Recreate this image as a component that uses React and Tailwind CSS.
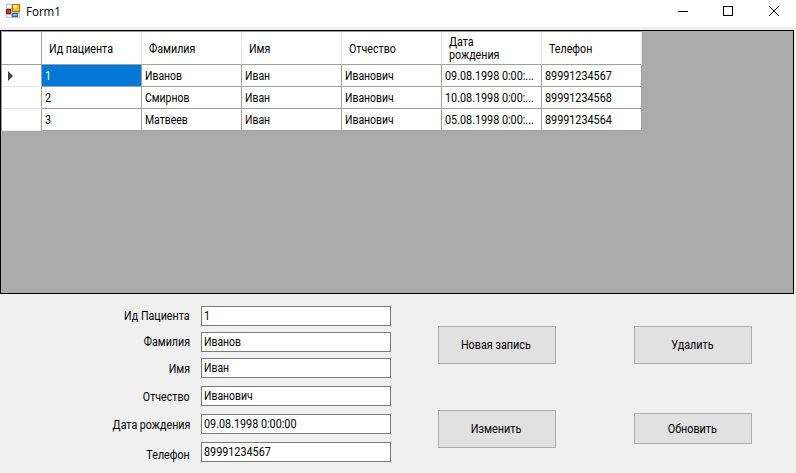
const columns = ["Ид пациента", "Фамилия", "Имя", "Отчество", "Дата рождения", "Телефон"];

const rows = [
  ["1", "Иванов", "Иван", "Иванович", "09.08.1998 0:00:...", "89991234567"],
  ["2", "Смирнов", "Иван", "Иванович", "10.08.1998 0:00:...", "89991234568"],
  ["3", "Матвеев", "Иван", "Иванович", "05.08.1998 0:00:...", "89991234564"],
];

const fields = [
  { label: "Ид Пациента", value: "1", gap: "mb-1.5" },
  { label: "Фамилия", value: "Иванов", gap: "mb-1.5" },
  { label: "Имя", value: "Иван", gap: "mb-2", shift: "pt-0.5" },
  { label: "Отчество", value: "Иванович", gap: "mb-2", shift: "pt-0.5" },
  { label: "Дата рождения", value: "09.08.1998 0:00:00", gap: "mb-2", shift: "pt-0.5" },
  { label: "Телефон", value: "89991234567", gap: "", shift: "pt-1.5" },
];

function AppIcon() {
  return (
    <svg width="14" height="14" viewBox="0 0 14 14" shapeRendering="crispEdges" className="shrink-0">
      <path d="M0 0h14v14H0z" fill="#c3c3c3" />
      <path d="M1 1h4v3H1zM1 11h4v2H1zM12 10h1v3h-1z" fill="#fff" />
      <path d="M6 0h8v8H6z" fill="#a87508" />
      <path d="M7 1h6v6H7z" fill="#ffc51f" />
      <path d="M7 1h4v3H7z" fill="#ffe68c" />
      <path d="M0 5h5v5H0z" fill="#8c1111" />
      <path d="M1 6h3v3H1z" fill="#d43a2a" />
      <path d="M6 9h6v4H6z" fill="#2860c0" />
      <path d="M7 10h4v2H7z" fill="#7fb2f5" />
    </svg>
  );
}

// Digits keep slightly wider proportions than Cyrillic words.
function Value({ children }) {
  const numeric = /^[\d.]/.test(children);
  return <span className={`origin-left ${numeric ? "scale-x-[0.9]" : "scale-x-[0.87]"}`}>{children}</span>;
}

function Button({ children, height }) {
  return (
    <button className={`flex w-[118px] items-center justify-center border border-[#adadad] bg-[#e1e1e1] pr-0.5 ${height}`}>
      <span className="scale-x-[0.9]">{children}</span>
    </button>
  );
}

export default function App() {
  return (
    <div className="flex h-[473px] w-[796px] flex-col overflow-hidden bg-[#f0f0f0] font-[Roboto,'Liberation_Sans',sans-serif] text-[12px] leading-[14px] whitespace-nowrap text-black">
      <header className="flex h-[27px] shrink-0 items-start bg-white pt-1 pl-1.5">
        <AppIcon />
        <span className="ml-1.5 origin-left scale-x-[0.96] pt-px font-['Open_Sans','Noto_Sans',sans-serif]">Form1</span>
        <svg width="102" height="12" viewBox="0 0 102 12" className="mt-px mr-4 ml-auto" fill="none" stroke="#000" shapeRendering="crispEdges">
          <path d="M0 6.5h10M45.5 1.5h9v9h-9z" />
          <path d="M91 1l10 10M101 1L91 11" shapeRendering="auto" />
        </svg>
      </header>

      <main className="mt-[3px] h-[264px] w-[794px] shrink-0 border border-black bg-[#ababab]">
        <div className="w-[641px] border-t border-l border-[#a0a0a0]">
          <div className="flex h-[33px] bg-white">
            <div className="w-10 border-r border-b border-[#a0a0a0]" />
            {columns.map((name) => (
              <div key={name} className={`flex w-[100px] items-center border-r border-b border-r-[#e5e5e5] border-b-[#a0a0a0] pl-[7px] leading-[13px] ${name === "Дата рождения" ? "pt-0.5" : "pt-[3px]"}`}>
                <span className={`origin-left scale-x-[0.89] ${name === "Дата рождения" ? "w-16 whitespace-normal" : ""}`}>{name}</span>
              </div>
            ))}
          </div>
          {rows.map((row, r) => (
            <div key={row[0]} className="flex h-[22px] bg-white">
              <div className="flex w-10 items-center border-r border-b border-r-[#a0a0a0] border-b-[#e5e5e5] pl-1.5">
                {r === 0 && (
                  <svg width="5" height="10" viewBox="0 0 5 10">
                    <path d="M0 0l5 5-5 5z" fill="#404040" />
                  </svg>
                )}
              </div>
              {row.map((cell, c) => (
                <div key={c} className={`flex w-[100px] items-center border-r border-b border-[#a0a0a0] pt-px pl-[3px] ${r === 0 && c === 0 ? "bg-[#0078d7] text-white" : ""}`}>
                  <Value>{cell}</Value>
                </div>
              ))}
            </div>
          ))}
        </div>
      </main>

      <section className="flex pt-3">
        <div className="w-[391px]">
          {fields.map((f) => (
            <div key={f.label} className={`flex h-5 ${f.gap}`}>
              <div className={`flex w-[190px] items-center justify-end ${f.shift || ""}`}>
                <span className="origin-right scale-x-[0.89]">{f.label}</span>
              </div>
              <div className="ml-[11px] flex w-[190px] items-center border border-[#7a7a7a] bg-white pl-0.5">
                <Value>{f.value}</Value>
              </div>
            </div>
          ))}
        </div>
        <div className="ml-[47px] flex flex-col gap-[46px] pt-5">
          <Button height="h-[38px]">Новая запись</Button>
          <Button height="h-[38px]">Изменить</Button>
        </div>
        <div className="ml-[78px] flex flex-col gap-[49px] pt-5">
          <Button height="h-[38px]">Удалить</Button>
          <Button height="h-[31px]">Обновить</Button>
        </div>
      </section>
    </div>
  );
}
